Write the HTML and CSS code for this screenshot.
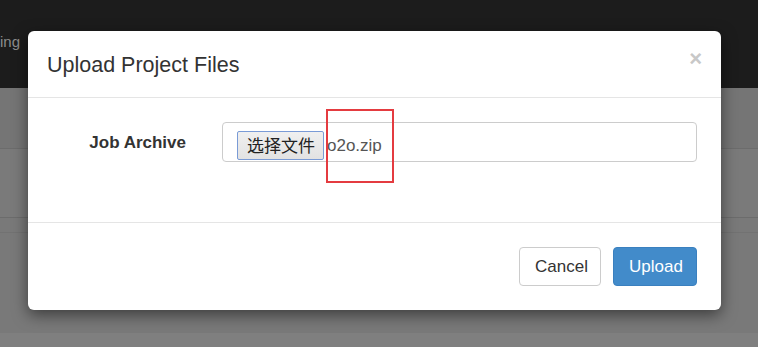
FILE: index.html
```html
<!DOCTYPE html>
<html lang="en">
<head>
    <meta charset="UTF-8">
    <meta name="viewport" content="width=device-width, initial-scale=1.0">
    <title>Upload Project Files</title>
    <link rel="stylesheet" href="styles.css">
</head>
<body>

<div class="page">
    <div class="navbar">
        <span class="nav-link">ing</span>
    </div>
    <div class="band band-a"></div>
    <div class="band band-b"></div>
    <div class="band band-c"></div>
    <div class="band band-d"></div>
</div>

<div class="modal">
    <div class="modal-header">
        <h4 class="modal-title">Upload Project Files</h4>
        <button class="close">&times;</button>
    </div>

    <div class="modal-body">
        <label class="control-label">Job Archive</label>
        <div class="file-field">
            <span class="file-btn">选择文件</span>
            <span class="file-name">o2o.zip</span>
            <div class="mark"></div>
        </div>
    </div>

    <div class="modal-footer">
        <button class="btn btn-default">Cancel</button>
        <button class="btn btn-primary">Upload</button>
    </div>
</div>

</body>
</html>
```

FILE: styles.css
```css
body { margin: 0; font-family: "Liberation Sans", Arial, sans-serif; background: #7f7f7f; overflow: hidden; }
.page { height: 347px; }
.navbar { height: 88px; background: #1c1c1c; }
.nav-link { display: block; padding-top: 33px; font-size: 15px; color: #8c8c8c; }
.band { border-bottom: 1px solid #6c6c6c; }
.band-a { height: 60px; background: #757575; }
.band-b { height: 68px; background: #7a7a7a; }
.band-c { height: 14px; background: #797979; border-bottom-color: #727272; }
.band-d { height: 100px; background: #797979; border-bottom: none; }

.modal { position: absolute; left: 28px; top: 31px; width: 693px; height: 279px; background: white; border-radius: 6px; box-shadow: 0 5px 15px rgba(0, 0, 0, 0.5); }
.modal-header { height: 66px; display: flex; align-items: center; justify-content: space-between; padding: 0 19px; border-bottom: 1px solid #e5e5e5; }
.modal-title { margin: 2px 0 0; font-size: 21.5px; font-weight: normal; color: #333; }
.close { border: none; background: none; padding: 0 0 10px; font-family: inherit; font-size: 22px; font-weight: bold; line-height: 1; color: #c8c8c8; }

.modal-body { height: 100px; padding: 24px 24px 0; display: grid; grid-template-columns: 134px 475px; column-gap: 36px; align-items: start; border-bottom: 1px solid #e5e5e5; }
.control-label { text-align: right; font-size: 17px; font-weight: bold; color: #333; line-height: 42px; }
.file-field { position: relative; height: 40px; border: 1px solid #ccc; border-radius: 4px; display: flex; align-items: flex-start; padding: 8px 0 0 14px; box-sizing: border-box; }
.file-btn { display: inline-block; height: 29px; padding: 0 8px 0 9px; box-sizing: border-box; border: 1px solid #7a9bd6; border-radius: 2px; background: linear-gradient(#f0f0f0, #e2e2e2); font-family: "Noto Sans CJK SC", sans-serif; font-size: 17px; line-height: 26px; color: #222; }
.file-name { margin-left: 3px; font-size: 17px; line-height: 29px; color: #555; }
.mark { position: absolute; left: 103px; top: -14px; width: 68px; height: 74px; border: 2px solid #e43b40; box-sizing: border-box; }

.modal-footer { display: flex; justify-content: flex-end; gap: 12px; padding: 24px 24px 0; }
.btn { height: 39px; padding: 0 15px; border-radius: 4px; font-family: inherit; font-size: 17px; }
.btn-default { width: 82px; background: white; border: 1px solid #ccc; color: #333; }
.btn-primary { width: 84px; background: #428bca; border: 1px solid #3a80bf; color: white; }
```
